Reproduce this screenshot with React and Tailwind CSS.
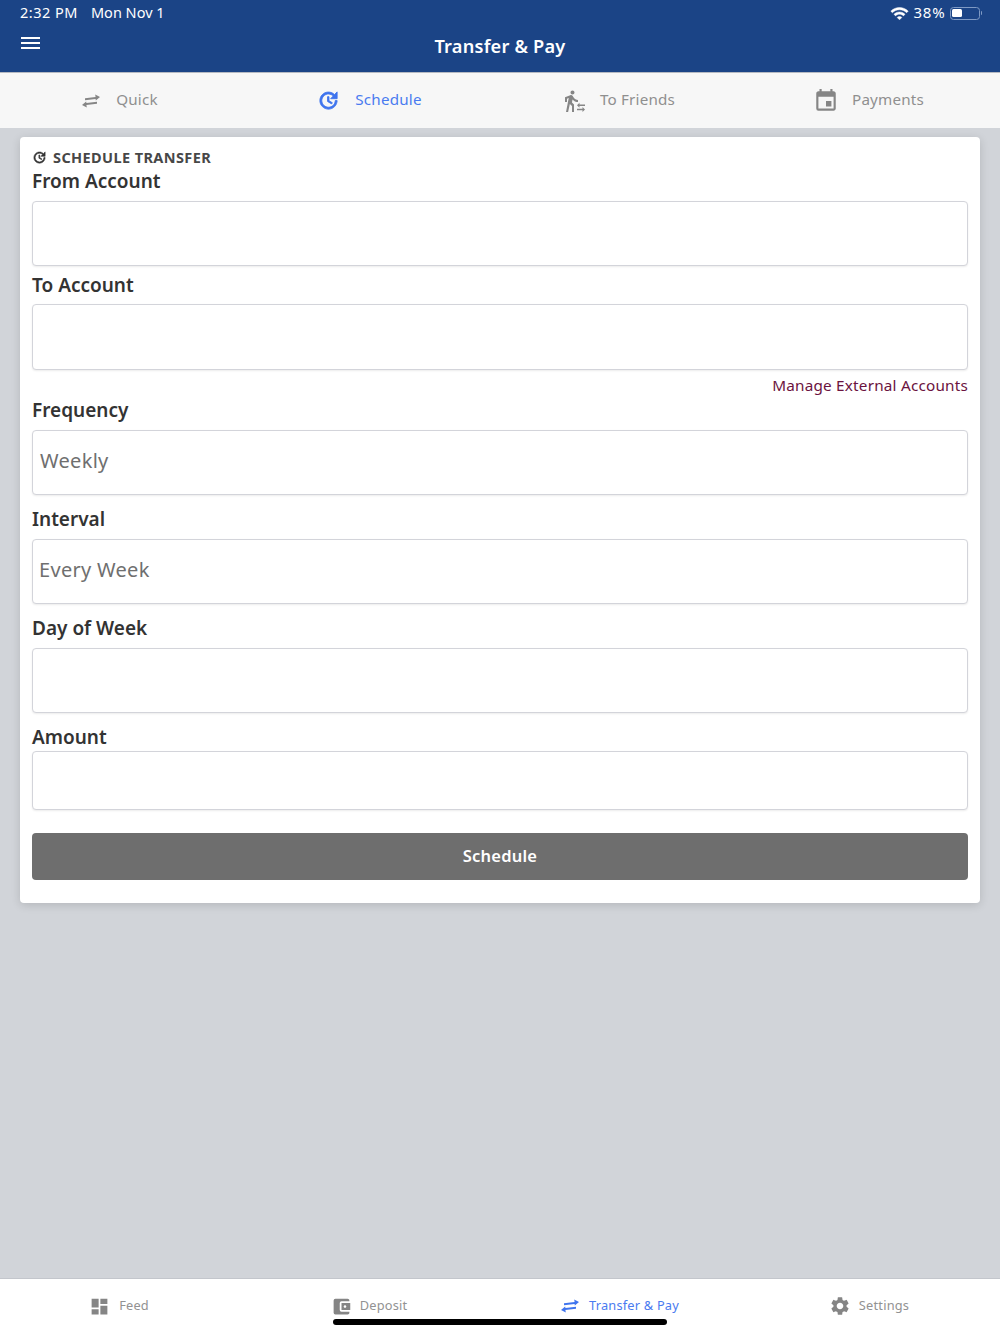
import React from "react";
import {
  MdTransferWithinAStation,
  MdEvent,
  MdDashboard,
  MdAccountBalanceWallet,
  MdSettings,
} from "react-icons/md";

const F = { fontFamily: '"Noto Sans", "Open Sans", sans-serif' };

function Arrows({ size = 18, className = "" }) {
  return (
    <svg width={size} height={(size * 14) / 18} viewBox="0 0 18 14" fill="currentColor" className={className}>
      <path d="M3 4.2 L13.6 3 L13.2 0.4 L18 3 L13.8 6.4 L13.6 5 L3 6.2 Z" />
      <path d="M15 9.8 L4.4 11 L4.8 13.6 L0 11 L4.2 7.6 L4.4 9 L15 7.8 Z" />
    </svg>
  );
}

function BoldUpdate({ size = 24, className = "" }) {
  return (
    <svg width={size} height={size} viewBox="0 0 24 24" fill="currentColor" stroke="currentColor" strokeWidth="0.9" className={className}>
      <path d="M21 10.12h-6.78l2.74-2.82c-2.73-2.7-7.15-2.8-9.88-.1-2.73 2.71-2.73 7.08 0 9.79s7.15 2.71 9.88 0C18.32 15.65 19 14.08 19 12.1h2c0 1.98-.88 4.55-2.64 6.29-3.51 3.48-9.21 3.48-12.72 0-3.5-3.47-3.53-9.11-.02-12.58s9.14-3.47 12.65 0L21 3v7.12zM12.5 8v4.25l3.5 2.08-.72 1.21L11 13V8h1.5z" />
    </svg>
  );
}

function Wifi() {
  return (
    <svg width="19" height="19" viewBox="0 0 24 24" fill="currentColor" stroke="currentColor" strokeWidth="0.6">
      <path d="M1 9l2 2c4.97-4.97 13.03-4.97 18 0l2-2C16.93 2.93 7.08 2.93 1 9zm8 8l3 3 3-3c-1.65-1.66-4.34-1.66-6 0zm-4-4l2 2c2.76-2.76 7.24-2.76 10 0l2-2C15.14 9.14 8.87 9.14 5 13z" />
    </svg>
  );
}

function TopTab({ icon: Icon, label, active, iconSize = 26, gap = "gap-[14px]", pad = "pr-[10px]" }) {
  return (
    <div className={`flex items-center justify-center ${pad} ${gap} ${active ? "text-[#4a7bf0]" : "text-[#8f8f8f]"}`}>
      <Icon size={iconSize} className={active ? "text-[#3f74ee]" : "text-[#868686]"} />
      <span className="-mt-[3px] text-[15.2px] leading-6 tracking-[0.2px]">{label}</span>
    </div>
  );
}

function BottomTab({ icon: Icon, label, active, iconSize = 20, gap = "gap-[8px]", pad = "pr-[12px]" }) {
  return (
    <div className={`flex h-[22px] items-center justify-center ${pad} ${gap} ${active ? "text-[#4a7bf0]" : "text-[#929292]"}`}>
      <Icon size={iconSize} className={active ? "text-[#3f74ee]" : "text-[#858585]"} />
      <span className="-mt-[2px] text-[12.8px] leading-5 tracking-[0.2px]">{label}</span>
    </div>
  );
}

function Field({ label, value, h = "h-[65px]", labelH = "h-[38px]", labelPad = "", valuePad = "pl-[7px]" }) {
  return (
    <div className="flex flex-col">
      <div className={`flex items-center ${labelH} ${labelPad} text-[19px] font-semibold text-[#333333]`}>{label}</div>
      <div className={`${h} flex items-center ${valuePad} rounded-[4px] border border-[#d3d4da] bg-white shadow-[0_1px_2px_rgba(0,0,0,0.08)] text-[20px] text-[#6f6f6f] tracking-[0.3px]`}>
        {value && <span className="-mt-[3px]">{value}</span>}
      </div>
    </div>
  );
}

export default function App() {
  return (
    <div style={F} className="relative flex h-[1334px] w-[1000px] flex-col overflow-hidden bg-[#d1d4d9]">
      <header className="h-[73px] shrink-0 border-b border-[#b6bac2] bg-[#1b4486] text-white">
        <div className="flex h-[26px] items-center justify-between pl-[20px] pr-[18px] text-[14.5px]">
          <div className="flex gap-[13px]">
            <span className="tracking-[0.5px]">2:32 PM</span>
            <span>Mon Nov 1</span>
          </div>
          <div className="flex items-center gap-[4px]">
            <Wifi />
            <span className="-mt-[1px] text-[15px] tracking-[0.8px]">38%</span>
            <div className="flex items-center">
              <div className="flex h-[13px] w-[30px] items-center rounded-[3.5px] border border-[#7f9ac4] p-[1.5px]">
                <div className="h-full w-[10px] rounded-[1.5px] bg-white" />
              </div>
              <div className="ml-[1px] h-[4px] w-[1.5px] rounded-r bg-[#7f9ac4]" />
            </div>
          </div>
        </div>
        <div className="relative flex h-[46px] items-center justify-center">
          <div className="absolute left-[21px] top-[11px] flex h-[12px] w-[19px] flex-col justify-between">
            <div className="h-[2px] bg-white" />
            <div className="h-[2px] bg-white" />
            <div className="h-[2px] bg-white" />
          </div>
          <span className="-mt-[5px] text-[18.2px] font-semibold tracking-[0.2px]">Transfer &amp; Pay</span>
        </div>
      </header>

      <nav className="grid h-[55px] shrink-0 grid-cols-4 bg-[#f7f7f7]">
        <TopTab icon={Arrows} label="Quick" iconSize={18} gap="gap-[16px]" />
        <TopTab icon={BoldUpdate} label="Schedule" active iconSize={23} gap="gap-[15px]" pad="pr-[11px]" />
        <TopTab icon={MdTransferWithinAStation} label="To Friends" iconSize={24} gap="gap-[13px]" pad="pr-[12px]" />
        <TopTab icon={MdEvent} label="Payments" iconSize={26} gap="gap-[13px]" pad="pr-[13px]" />
      </nav>

      <main className="flex-1 px-[20px] pt-[9px]">
        <section className="h-[766px] rounded-[4px] bg-white px-[12px] shadow-[0_2px_10px_rgba(0,0,0,0.14)]">
          <div className="flex h-[32px] items-end gap-[6px] pb-[2px] text-[14.5px] font-bold leading-5 tracking-[0.4px] text-[#474747]">
            <BoldUpdate size={15} className="mb-[2px] text-[#333333]" />
            <span>SCHEDULE TRANSFER</span>
          </div>
          <Field label="From Account" labelH="h-[32px]" labelPad="pb-[8px]" />
          <Field label="To Account" h="h-[66px]" />
          <div className="flex h-[32px] items-center justify-end pb-[2px] text-[15.3px] tracking-[0.2px] text-[#6b1340]">Manage External Accounts</div>
          <Field label="Frequency" labelH="h-[28px]" labelPad="pb-[12px]" value="Weekly" />
          <Field label="Interval" labelH="h-[44px]" labelPad="pt-[4px]" value="Every Week" valuePad="pl-[6px]" />
          <Field label="Day of Week" labelH="h-[44px]" labelPad="pt-[4px]" />
          <Field label="Amount" h="h-[59px]" labelH="h-[38px]" labelPad="pt-[10px]" />
          <button className="mt-[23px] flex h-[47px] w-full items-center justify-center rounded-[4px] bg-[#6e6e6e] text-[16.5px] font-semibold tracking-[0.2px] text-white">
            Schedule
          </button>
        </section>
      </main>

      <footer className="grid h-[56px] shrink-0 grid-cols-4 items-start border-t border-[#c3c6cc] bg-white pt-[16px]">
        <BottomTab icon={MdDashboard} label="Feed" iconSize={21} gap="gap-[9px]" />
        <BottomTab icon={MdAccountBalanceWallet} label="Deposit" iconSize={21} />
        <BottomTab icon={Arrows} label="Transfer & Pay" active iconSize={18} gap="gap-[10px]" pad="pr-[10px]" />
        <BottomTab icon={MdSettings} label="Settings" iconSize={22} />
      </footer>

      <div className="absolute bottom-[9px] left-[333px] h-[6px] w-[334px] rounded-full bg-black" />
    </div>
  );
}
